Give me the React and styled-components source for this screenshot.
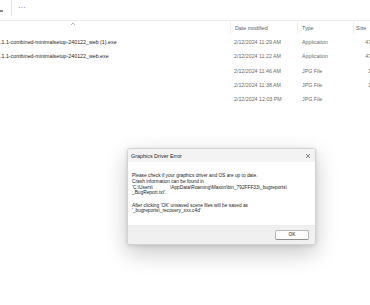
import styled, { createGlobalStyle } from 'styled-components';

const Global = createGlobalStyle`
  html, body {
    margin: 0;
    padding: 0;
    background: #ffffff;
  }
  body {
    font-family: "Liberation Sans", Arial, sans-serif;
  }
`;

const Page = styled.div`
  position: relative;
  width: 370px;
  height: 305px;
  overflow: hidden;
  background: #ffffff;
`;

const Toolbar = styled.div`
  display: flex;
  align-items: center;
  height: 20px;
  border-bottom: 1px solid #ececec;
  color: #555;
`;

const ToolEdge = styled.div`
  width: 3px;
  height: 2px;
  margin-top: 1px;
  background: #8a8a8a;
`;

const Divider = styled.div`
  width: 1px;
  height: 16px;
  margin: -4px 6px 0 8px;
  background: #e3e3e3;
`;

const More = styled.div`
  font-size: 7px;
  letter-spacing: 0.3px;
  line-height: 1;
  margin-top: -5px;
  color: #444;
`;

const Grid = styled.div`
  display: grid;
  grid-template-columns: 230px 67px 56px 41px;
  width: 394px;
  height: ${p => p.$h}px;
  align-items: center;
  font-size: 5.3px;
  white-space: nowrap;
`;

const HeadCell = styled.div`
  height: 100%;
  display: flex;
  align-items: center;
  padding-left: ${p => p.$pad || 4}px;
  border-left: ${p => (p.$first ? 'none' : '1px solid #efefef')};
  color: #5c5c5c;
  box-sizing: border-box;
`;

const Caret = styled.svg`
  margin-left: 66px;
  margin-top: -7px;
`;

const List = styled.div`
  padding-top: 1px;
`;

const Cell = styled.div`
  padding-left: ${p => p.$pad ?? 4}px;
  padding-right: ${p => p.$right || 0}px;
  text-align: ${p => p.$align || 'left'};
  color: ${p => (p.$dark ? '#1e1e1e' : '#6a6a6a')};
  overflow: hidden;
`;

const Dialog = styled.div`
  position: absolute;
  left: 127px;
  top: 148px;
  width: 189px;
  border: 1px solid #d2d2d2;
  border-radius: 3px;
  box-sizing: border-box;
  overflow: hidden;
  box-shadow: 0 8px 22px rgba(0, 0, 0, 0.22), 0 1px 4px rgba(0, 0, 0, 0.12);
  background: #ffffff;
`;

const TitleBar = styled.div`
  display: flex;
  align-items: center;
  justify-content: space-between;
  height: 13px;
  padding: 0 4px 0 3px;
  background: #f3f3f3;
  font-size: 5.4px;
  color: #1f1f1f;
`;

const Close = styled.svg`
  display: block;
`;

const Body = styled.div`
  padding: 11px 5px 11px 4px;
  font-size: 4.8px;
  line-height: 5.8px;
  color: #1a1a1a;
  white-space: nowrap;
`;

const Para = styled.p`
  margin: ${p => (p.$gap ? '6.5px' : '0')} 0 0 0;
`;

const Blank = styled.span`
  display: inline-block;
  width: 17px;
`;

const Footer = styled.div`
  display: flex;
  justify-content: flex-end;
  align-items: center;
  height: 18.5px;
  padding-right: 6px;
  background: #f0f0f0;
  border-top: 1px solid #ececec;
  box-sizing: border-box;
`;

const OkButton = styled.button`
  width: 34px;
  height: 9.5px;
  padding: 0;
  border: 1px solid #b4b4b4;
  border-bottom-color: #8e8e8e;
  border-radius: 2px;
  background: #fdfdfd;
  font-family: "Liberation Sans", Arial, sans-serif;
  font-size: 4.8px;
  line-height: 1;
  color: #1a1a1a;
`;

const rows = [
  { name: '.1.1-combined-minimalsetup-240122_web (1).exe', date: '2/12/2024 11:29 AM', type: 'Application', size: '47,296 KB' },
  { name: '.1.1-combined-minimalsetup-240122_web.exe', date: '2/12/2024 11:22 AM', type: 'Application', size: '47,296 KB' },
  { name: '', date: '2/12/2024 11:46 AM', type: 'JPG File', size: '1,234 KB' },
  { name: '', date: '2/12/2024 11:38 AM', type: 'JPG File', size: '1,187 KB' },
  { name: '', date: '2/12/2024 12:03 PM', type: 'JPG File', size: '' },
];

export default function App() {
  return (
    <Page>
      <Global />
      <Toolbar>
        <ToolEdge />
        <Divider />
        <More>···</More>
      </Toolbar>

      <Grid $h={13}>
        <HeadCell $first $pad={0}>
          <Caret width="6" height="4" viewBox="0 0 6 4">
            <path d="M1 3 L3 1 L5 3" fill="none" stroke="#9a9a9a" strokeWidth="0.7" />
          </Caret>
        </HeadCell>
        <HeadCell>Date modified</HeadCell>
        <HeadCell $pad={4}>Type</HeadCell>
        <HeadCell $pad={2}>Size</HeadCell>
      </Grid>

      <List>
        {rows.map((r, i) => (
          <Grid key={i} $h={14.25}>
            <Cell $dark $pad={0}>{r.name}</Cell>
            <Cell $pad={4}>{r.date}</Cell>
            <Cell $pad={5}>{r.type}</Cell>
            <Cell $align="right" $right={4}>{r.size}</Cell>
          </Grid>
        ))}
      </List>

      <Dialog>
        <TitleBar>
          <span>Graphics Driver Error</span>
          <Close width="6" height="6" viewBox="0 0 6 6">
            <path d="M1 1 L5 5 M5 1 L1 5" stroke="#333" strokeWidth="0.6" />
          </Close>
        </TitleBar>
        <Body>
          <Para>Please check if your graphics driver and OS are up to date.</Para>
          <Para>Crash information can be found in</Para>
          <Para>
            'C:\Users\<Blank />\AppData\Roaming\Maxon\bin_792FFF33\_bugreports\
          </Para>
          <Para>_BugReport.txt'.</Para>
          <Para $gap>After clicking 'OK' unsaved scene files will be saved as</Para>
          <Para>'_bugreports\_recovery_xxx.c4d'</Para>
        </Body>
        <Footer>
          <OkButton>OK</OkButton>
        </Footer>
      </Dialog>
    </Page>
  );
}
